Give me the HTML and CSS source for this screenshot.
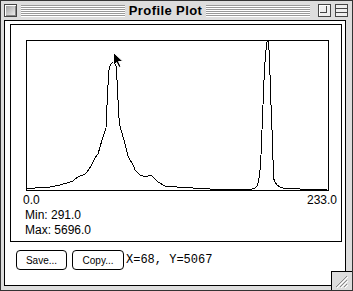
FILE: index.html
```html
<!DOCTYPE html>
<html lang="en">
<head>
  <meta charset="UTF-8" />
  <title>Profile Plot</title>
  <link rel="stylesheet" href="styles.css">
</head>
<body>
  <div class="window">
    <div class="titlebar">
      <span class="box close-box"></span>
      <span class="stripes"></span>
      <span class="title">Profile Plot</span>
      <span class="stripes"></span>
      <span class="box zoom-box"><span class="zoom-inner"></span></span>
      <span class="box shade-box"></span>
    </div>

    <div class="content">
      <div class="panel">
        <div class="plot">
          <svg class="graph" width="303" height="151" viewBox="26 40 303 151" shape-rendering="crispEdges">
            <rect x="26.5" y="40.5" width="302" height="150" fill="none" stroke="#000" />
            <polyline fill="none" stroke="#000" stroke-width="1"
              points="27,188 35,188 45,187 50,187 55,186 60,185 63,184 67,183 70,182 73,181 75,179 78,177 80,176 83,175 85,174 87,172 89,169 91,166 93,162 95,158 98,154 100,147 102,140 104,134 106,128 107,105 108,85 109,70 110,66 111,64 112,63 113,62 114,63 115,62 116,66 117,80 118,100 119,118 120,126 122,133 124,140 126,148 128,156 130,160 132,163 134,167 135,170 137,172 140,175 143,176 145,177 148,176 150,175 152,176 154,178 156,180 158,182 160,183 163,185 165,186 170,186 177,187 185,187 193,188 210,189 230,189 245,189 252,189 255,188 257,186 258,183 259,178 260,170 261,155 262,130 263,105 264,80 265,62 266,50 267,42 268,41 269,50 270,75 271,105 272,130 273,160 273,177 275,182 277,185 280,187 283,188 290,188 300,189 310,189 327,189" />
          </svg>
          <svg class="cursor" width="12" height="17" viewBox="0 0 12 17">
            <polygon points="0.5,0.5 0.5,13.5 3.5,10.5 6,15.5 8,14.5 5.5,9.5 10,9.5" fill="#000" stroke="#fff" stroke-width="1" />
          </svg>
        </div>
        <div class="axis">
          <span>0.0</span>
          <span>233.0</span>
        </div>
        <div class="stats">
          <div>Min: 291.0</div>
          <div>Max: 5696.0</div>
        </div>
      </div>

      <div class="actions">
        <button class="btn save-btn">Save...</button>
        <button class="btn">Copy...</button>
        <span class="coords">X=68, Y=5067</span>
      </div>
    </div>

    <div class="grow">
      <svg width="20" height="18" viewBox="0 0 20 18">
        <line x1="4" y1="15" x2="15" y2="4" stroke="#888" />
        <line x1="5" y1="16" x2="16" y2="5" stroke="#fff" />
        <line x1="8" y1="15" x2="15" y2="8" stroke="#888" />
        <line x1="9" y1="16" x2="16" y2="9" stroke="#fff" />
        <line x1="12" y1="15" x2="15" y2="12" stroke="#888" />
        <line x1="13" y1="16" x2="16" y2="13" stroke="#fff" />
      </svg>
    </div>
  </div>
</body>
</html>
```

FILE: styles.css
```css
* {
  margin: 0;
  padding: 0;
  box-sizing: border-box;
}

body {
  background: #fff;
  font-family: 'Liberation Sans', Arial, sans-serif;
  color: #000;
}

.window {
  position: relative;
  width: 353px;
  height: 291px;
  border: 1px solid #333;
  background: #dddddd;
  display: flex;
  flex-direction: column;
}

/* title bar */
.titlebar {
  height: 19px;
  display: flex;
  align-items: center;
  padding: 0 4px 0 3px;
}

.box {
  width: 13px;
  height: 13px;
  border: 1px solid #444;
  flex: none;
  position: relative;
}

.close-box {
  background: linear-gradient(135deg, #999, #f4f4f4);
  box-shadow: inset 1px 1px #fff, inset -1px -1px #888;
}

.zoom-box {
  margin-left: 4px;
  background: #eee;
  box-shadow: inset 1px 1px #fff;
}

.zoom-inner {
  position: absolute;
  left: 1px;
  top: 1px;
  width: 7px;
  height: 7px;
  border: 1px solid #444;
  border-top: none;
  border-left: none;
}

.shade-box {
  margin-left: 4px;
  background: linear-gradient(to bottom, #eee 0 3px, #444 3px 4px, #eee 4px 7px, #444 7px 8px, #eee 8px);
}

.stripes {
  flex: 1;
  height: 12px;
  margin: 0 4px;
  background: repeating-linear-gradient(to bottom, #999 0 1px, #fff 1px 2px);
}

.title {
  font-weight: bold;
  font-size: 13px;
  letter-spacing: 0.4px;
  line-height: 19px;
}

/* content */
.content {
  flex: 1;
  margin: 0 6px 4px 3px;
  border: 1px solid #000;
  background: #fff;
  display: flex;
  flex-direction: column;
}

.panel {
  margin: 3px 3px 0 5px;
  border: 1px solid #000;
  padding-bottom: 3px;
  font-size: 12px;
  line-height: 15px;
}

.plot {
  position: relative;
  margin: 15px 0 0 15px;
  width: 303px;
  height: 151px;
}

.graph {
  display: block;
}

.cursor {
  position: absolute;
  left: 87px;
  top: 12px;
}

.axis {
  margin-top: 2px;
  display: flex;
  justify-content: space-between;
  padding: 0 4px 0 12px;
}

.stats {
  padding-left: 14px;
}

.actions {
  margin-top: 8px;
  padding-left: 11px;
  display: flex;
  align-items: center;
}

.btn {
  width: 52px;
  height: 20px;
  border: 1px solid #000;
  border-radius: 4px;
  background: #fff;
  font-family: 'Liberation Sans', Arial, sans-serif;
  font-size: 10px;
  color: #000;
  margin-right: 5px;
}

.save-btn {
  width: 51px;
}

.coords {
  margin-left: -3px;
  font-family: 'Liberation Mono', 'Courier New', monospace;
  font-size: 12px;
}

/* resize box */
.grow {
  position: absolute;
  right: 0;
  bottom: 0;
  width: 21px;
  height: 19px;
  border-left: 1px solid #000;
  border-top: 1px solid #000;
  background: #dddddd;
}

.grow svg {
  display: block;
}
```
